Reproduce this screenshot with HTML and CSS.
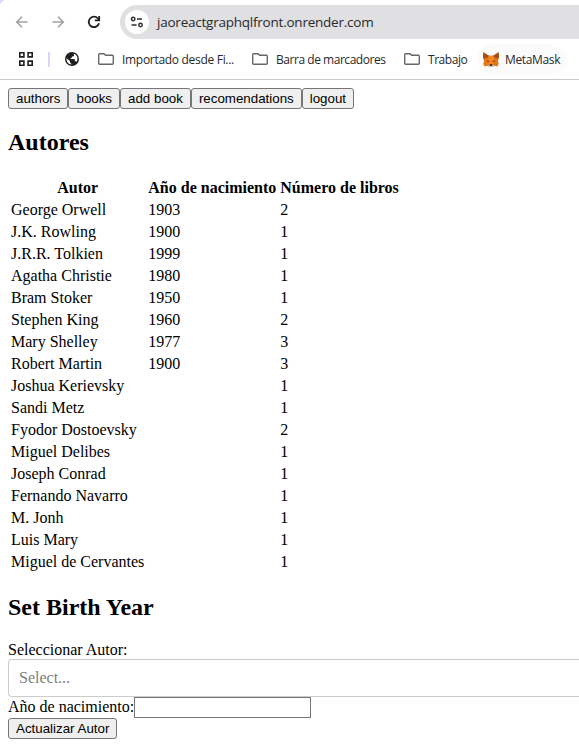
FILE: index.html
```html
<!DOCTYPE html>
<html lang="es">
<head>
<meta charset="utf-8">
<title>Autores</title>
<link rel="stylesheet" href="styles.css">
</head>
<body>
<header class="browser">
  <div class="toolbar">
    <svg class="nav-icon back" viewBox="0 0 16 16"><path d="M13.5 8H3M8 2.700 2.700 8 8 13.300"/></svg>
    <svg class="nav-icon forward" viewBox="0 0 16 16"><path d="M2.500 8H13M8 2.700 13.300 8 8 13.300"/></svg>
    <svg class="nav-icon reload" viewBox="0 0 16 16"><path d="M13 9.200A5.200 5.200 0 1 1 11.900 4.500L13 5.700"/><path d="M13.200 2V6.300H8.800"/></svg>
    <div class="address">
      <span class="site-info"><svg viewBox="0 0 14 12"><circle cx="3.200" cy="3" r="1.700"/><path d="M7 3h5M1.500 9h5"/><circle cx="10.500" cy="9" r="1.700"/></svg></span>
      <span class="url">jaoreactgraphqlfront.onrender.com</span>
    </div>
  </div>
  <nav class="bookmarks">
    <svg class="apps" viewBox="0 0 14 14"><path d="M.8.8h4.100v4.100H.8zM9.100.8h4.100v4.100H9.100zM.8 9.100h4.100v4.100H.8zM9.100 9.100h4.100v4.100H9.100z"/></svg>
    <span class="separator"></span>
    <svg class="globe" viewBox="0 0 14 14"><circle cx="7" cy="7" r="7"/><path d="M1.500 6.200 5 9.300v1.200l1.300 1.200v.9A5.600 5.600 0 0 1 1.500 6.200zM8.200 1.600A5.500 5.500 0 0 1 12.500 6.500c-.1 1.600-.5 2.600-1.100 3.400-.3-.5-.6-.8-1.100-.8h-.5V7.600L9.200 7H5.700V5.700H7V4.400h1.200l.8-.7V2.600z"/></svg>
    <span class="bookmark one"><svg class="folder" viewBox="0 0 16 12"><path d="M.7 10.300V1.700q0-1 1-1H6l1.600 1.600h6.700q1 0 1 1v7q0 1-1 1H1.700q-1 0-1-1z"/></svg><span>Importado desde Fi...</span></span>
    <span class="bookmark two"><svg class="folder" viewBox="0 0 16 12"><path d="M.7 10.300V1.700q0-1 1-1H6l1.600 1.600h6.700q1 0 1 1v7q0 1-1 1H1.700q-1 0-1-1z"/></svg><span>Barra de marcadores</span></span>
    <span class="bookmark three"><svg class="folder" viewBox="0 0 16 12"><path d="M.7 10.300V1.700q0-1 1-1H6l1.600 1.600h6.700q1 0 1 1v7q0 1-1 1H1.700q-1 0-1-1z"/></svg><span>Trabajo</span></span>
    <span class="bookmark four"><svg class="fox" viewBox="0 0 16 15"><path fill="#e2761b" d="M.4.3 5.800 3.800h4.400L15.600.3l.4 5-1 4 .7 2.500-1.200 2.600-3.200-.7L9.500 15h-3l-1.800-1.300-3.200.7L.3 11.800 1 9.300l-1-4z"/><path fill="#a3501c" d="M.4.3 5.800 3.800 4.500 5.500 1 6.800 0 5.300zM15.600.3l-5.400 3.500 1.300 1.700L15 6.800l1-1.500z"/><path fill="#f6851b" d="M5.800 3.800h4.400l1 5-1.200 4H6l-1.200-4z"/><path fill="#763d16" d="m4 8.200 2.300.8-.3 1-2-.8zM12 8.200 9.700 9l.3 1 2-.8z"/><path fill="#d7c1b3" d="m4.700 13.700 1.500-1h3.600l1.500 1L9.500 15h-3z"/><path fill="#161616" d="M6.800 12.300h2.400l.2 1.500H6.600z"/></svg><span>MetaMask</span></span>
  </nav>
</header>
<main class="page">
  <div class="menu"><button>authors</button><button>books</button><button>add book</button><button>recomendations</button><button>logout</button></div>
  <h2>Autores</h2>
  <table>
    <thead><tr><th>Autor</th><th>Año de nacimiento</th><th>Número de libros</th></tr></thead>
    <tbody>
      <tr><td>George Orwell</td><td>1903</td><td>2</td></tr>
      <tr><td>J.K. Rowling</td><td>1900</td><td>1</td></tr>
      <tr><td>J.R.R. Tolkien</td><td>1999</td><td>1</td></tr>
      <tr><td>Agatha Christie</td><td>1980</td><td>1</td></tr>
      <tr><td>Bram Stoker</td><td>1950</td><td>1</td></tr>
      <tr><td>Stephen King</td><td>1960</td><td>2</td></tr>
      <tr><td>Mary Shelley</td><td>1977</td><td>3</td></tr>
      <tr><td>Robert Martin</td><td>1900</td><td>3</td></tr>
      <tr><td>Joshua Kerievsky</td><td></td><td>1</td></tr>
      <tr><td>Sandi Metz</td><td></td><td>1</td></tr>
      <tr><td>Fyodor Dostoevsky</td><td></td><td>2</td></tr>
      <tr><td>Miguel Delibes</td><td></td><td>1</td></tr>
      <tr><td>Joseph Conrad</td><td></td><td>1</td></tr>
      <tr><td>Fernando Navarro</td><td></td><td>1</td></tr>
      <tr><td>M. Jonh</td><td></td><td>1</td></tr>
      <tr><td>Luis Mary</td><td></td><td>1</td></tr>
      <tr><td>Miguel de Cervantes</td><td></td><td>1</td></tr>
    </tbody>
  </table>
  <h2>Set Birth Year</h2>
  <form>
    <div>Seleccionar Autor:</div>
    <div class="select">Select...</div>
    <div class="year"><label for="born">Año de nacimiento:</label><input id="born" type="text"></div>
    <button type="button">Actualizar Autor</button>
  </form>
</main>
</body>
</html>
```
FILE: styles.css
```css
body {
  margin: 0;
  background: #fff;
  color: #000;
  font: 16px "Liberation Serif", serif;
}

svg { display: block; flex: none; }

.browser {
  box-sizing: border-box;
  height: 80px;
  padding-top: 5px;
  border-bottom: 1px solid #c9c9ca;
  background: radial-gradient(circle at 10px 10px, #fff 11px, #e4d4fa 12px) 0 0 / 5px 5px no-repeat;
  font-family: "Open Sans", sans-serif;
  color: #28292b;
}

.toolbar {
  display: flex;
  align-items: center;
  height: 34px;
}

.nav-icon {
  width: 16px;
  height: 16px;
  fill: none;
  stroke: #a0a0a2;
  stroke-width: 1.5;
}
.back { margin-left: 14px; }
.forward { margin-left: 20px; }
.reload { margin-left: 20px; stroke: #1f1f1f; stroke-width: 1.8; }

.address {
  display: flex;
  flex: 1;
  align-items: center;
  height: 34px;
  margin-left: 18px;
  border-radius: 17px 0 0 17px;
  background: #e0e0e2;
}
.site-info {
  display: grid;
  place-items: center;
  width: 24px;
  height: 24px;
  margin-left: 5px;
  border-radius: 50%;
  background: #fff;
}
.site-info svg {
  width: 14px;
  height: 12px;
  fill: none;
  stroke: #303134;
  stroke-width: 1.5;
}
.url {
  margin-left: 8px;
  font-size: 13.5px;
  letter-spacing: -0.23px;
}

.bookmarks {
  display: flex;
  align-items: center;
  height: 40px;
  font-size: 12px;
  white-space: nowrap;
}
.apps {
  width: 14px;
  height: 14px;
  margin-left: 19px;
  fill: none;
  stroke: #1f1f1f;
  stroke-width: 1.6;
}
.separator {
  width: 2px;
  height: 15px;
  margin-left: 15px;
  background: #e1d2fa;
}
.globe { width: 14px; height: 14px; margin-left: 15px; fill: #1f1f1f; }
.globe path { fill: #fff; }
.bookmark {
  display: flex;
  align-items: center;
  gap: 8px;
  box-sizing: border-box;
}
.folder {
  width: 16px;
  height: 12px;
  fill: none;
  stroke: #65676a;
  stroke-width: 1.4;
}
.one { width: 154px; margin-left: 19px; letter-spacing: -0.3px; }
.two { width: 152px; letter-spacing: -0.46px; }
.three { width: 73px; letter-spacing: -0.45px; }
.four {
  gap: 6px;
  height: 30px;
  width: 90px;
  padding-left: 6px;
  border-radius: 15px;
  background: #fbfbfc;
  letter-spacing: -0.35px;
}
.fox { width: 16px; height: 15px; }

.page { padding: 8px 0 8px 8px; }

.menu { display: flex; height: 22px; }

button {
  box-sizing: border-box;
  height: 21px;
  margin: 0;
  padding: 1px 7px;
  border: 1px solid #767676;
  border-radius: 3px;
  background: #efefef;
  color: #000;
  font: 13.333px "Liberation Sans", sans-serif;
}

h2 {
  margin: 20px 0;
  font-size: 24px;
  line-height: 27px;
}
.menu + h2 { margin-top: 19px; }

table { border-spacing: 2px; }
th, td { height: 18px; padding: 1px; line-height: 18px; }

form > div { line-height: 18px; }
form .select {
  box-sizing: border-box;
  height: 38px;
  padding-left: 10px;
  border: 1px solid #ccc;
  border-right: 0;
  border-radius: 4px 0 0 4px;
  color: #808080;
  line-height: 36px;
}
form .year { display: flex; height: 21px; line-height: 20px; }
input {
  box-sizing: border-box;
  width: 177px;
  height: 21px;
  margin: 0;
  padding: 1px 2px;
  border: 1px solid #767676;
  border-radius: 0;
}
form button { display: block; }
```
